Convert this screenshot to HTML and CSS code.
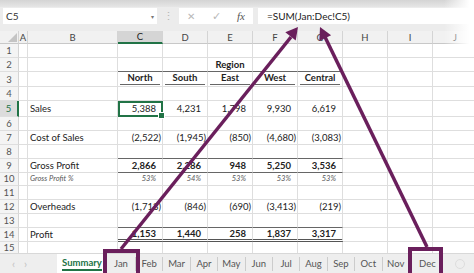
FILE: index.html
```html
<!DOCTYPE html>
<html lang="en">
<head>
    <meta charset="UTF-8">
    <title>Summary - 3D SUM</title>
    <link rel="stylesheet" href="styles.css">
</head>
<body>
<div class="app">
    <div class="ribbon-edge"></div>

    <!-- name box + formula bar -->
    <div class="formula-bar">
        <div class="name-box"><span>C5</span><span class="caret">&#9662;</span></div>
        <div class="grip">&#8942;</div>
        <div class="fx-buttons">
            <span class="btn-x">&#10005;</span>
            <span class="btn-ok">&#10003;</span>
            <span class="btn-fx">fx</span>
        </div>
        <div class="formula">=SUM(Jan:Dec!C5)</div>
    </div>

    <!-- grid -->
    <div class="sheet">
        <div class="row head">
            <div class="corner"><svg width="11" height="11" viewBox="0 0 11 11"><polygon points="10,1 10,10 1,10" fill="#c4c4c4"/></svg></div>
            <div>A</div><div>B</div><div class="sel-col">C</div><div>D</div><div>E</div><div>F</div><div>G</div><div>H</div><div>I</div><div>J</div>
        </div>
        <div class="row h14">
            <div class="rh">1</div><div></div><div></div><div></div><div></div><div></div><div></div><div></div><div></div><div></div><div></div>
        </div>
        <div class="row h14">
            <div class="rh">2</div><div></div><div></div><div class="ln"></div><div class="ln"></div><div class="ln b ctr">Region</div><div class="ln"></div><div class="ln"></div><div></div><div></div><div></div>
        </div>
        <div class="row h15">
            <div class="rh">3</div><div></div><div></div>
            <div class="hd"><span>North</span></div><div class="hd"><span>South</span></div><div class="hd"><span>East</span></div><div class="hd"><span>West</span></div><div class="hd"><span>Central</span></div>
            <div></div><div></div><div></div>
        </div>
        <div class="row h14">
            <div class="rh">4</div><div></div><div></div><div></div><div></div><div></div><div></div><div></div><div></div><div></div><div></div>
        </div>
        <div class="row h16">
            <div class="rh sel-row">5</div><div></div><div>Sales</div>
            <div class="n sel">5,388</div><div class="n">4,231</div><div class="n">1,798</div><div class="n">9,930</div><div class="n">6,619</div>
            <div></div><div></div><div></div>
        </div>
        <div class="row h13">
            <div class="rh">6</div><div></div><div></div><div></div><div></div><div></div><div></div><div></div><div></div><div></div><div></div>
        </div>
        <div class="row h14">
            <div class="rh">7</div><div></div><div>Cost of Sales</div>
            <div class="n neg">(2,522)</div><div class="n neg">(1,945)</div><div class="n neg">(850)</div><div class="n neg">(4,680)</div><div class="n neg">(3,083)</div>
            <div></div><div></div><div></div>
        </div>
        <div class="row h14">
            <div class="rh">8</div><div></div><div></div><div class="ln"></div><div class="ln"></div><div class="ln"></div><div class="ln"></div><div class="ln"></div><div></div><div></div><div></div>
        </div>
        <div class="row h14">
            <div class="rh">9</div><div></div><div>Gross Profit</div>
            <div class="n b ln">2,866</div><div class="n b ln">2,286</div><div class="n b ln">948</div><div class="n b ln">5,250</div><div class="n b ln">3,536</div>
            <div></div><div></div><div></div>
        </div>
        <div class="row h13">
            <div class="rh">10</div><div></div><div class="pct">Gross Profit %</div>
            <div class="n pct">53%</div><div class="n pct">54%</div><div class="n pct">53%</div><div class="n pct">53%</div><div class="n pct">53%</div>
            <div></div><div></div><div></div>
        </div>
        <div class="row h14">
            <div class="rh">11</div><div></div><div></div><div></div><div></div><div></div><div></div><div></div><div></div><div></div><div></div>
        </div>
        <div class="row h14">
            <div class="rh">12</div><div></div><div>Overheads</div>
            <div class="n neg">(1,713)</div><div class="n neg">(846)</div><div class="n neg">(690)</div><div class="n neg">(3,413)</div><div class="n neg">(219)</div>
            <div></div><div></div><div></div>
        </div>
        <div class="row h13">
            <div class="rh">13</div><div></div><div></div><div class="ln"></div><div class="ln"></div><div class="ln"></div><div class="ln"></div><div class="ln"></div><div></div><div></div><div></div>
        </div>
        <div class="row h14">
            <div class="rh">14</div><div></div><div>Profit</div>
            <div class="n b dbl">1,153</div><div class="n b dbl">1,440</div><div class="n b dbl">258</div><div class="n b dbl">1,837</div><div class="n b dbl">3,317</div>
            <div></div><div></div><div></div>
        </div>
        <div class="row h13">
            <div class="rh">15</div><div></div><div></div><div></div><div></div><div></div><div></div><div></div><div></div><div></div><div></div>
        </div>
    </div>

    <!-- sheet tabs -->
    <div class="tabs">
        <div class="nav"><span>&#8249;</span><span>&#8250;</span></div>
        <div class="tab active"><span>Summary</span></div>
        <div class="tab jan">Jan</div>
        <div class="tab">Feb</div>
        <div class="tab">Mar</div>
        <div class="tab">Apr</div>
        <div class="tab">May</div>
        <div class="tab">Jun</div>
        <div class="tab">Jul</div>
        <div class="tab">Aug</div>
        <div class="tab">Sep</div>
        <div class="tab">Oct</div>
        <div class="tab">Nov</div>
        <div class="tab dec">Dec</div>
        <div class="add"></div>
    </div>

    <div class="fade"></div>

    <!-- callout arrows -->
    <svg class="arrows" width="474" height="273" viewBox="0 0 474 273">
        <g stroke="#6a1f5c" fill="none" stroke-width="4">
            <rect x="105" y="251" width="33" height="24"/>
            <rect x="410" y="249" width="31" height="26"/>
        </g>
        <g stroke="#6a1f5c" stroke-width="3.5">
            <line x1="121" y1="249" x2="291" y2="37"/>
            <line x1="427" y1="247" x2="325" y2="37"/>
        </g>
        <g fill="#6a1f5c">
            <polygon points="298,27 295.7,40.6 285.3,32.2"/>
            <polygon points="320,27 331.1,35.2 319.3,40.9"/>
        </g>
    </svg>
</div>
</body>
</html>
```

FILE: styles.css
```css
* {
    box-sizing: border-box;
}
body {
    margin: 0;
    background: #fff;
    font-family: Lato, "Liberation Sans", sans-serif;
    color: #222;
}
.app {
    position: relative;
    width: 474px;
    height: 273px;
    overflow: hidden;
}
.ribbon-edge {
    height: 7px;
    background: linear-gradient(#d4d4d4, #e6e6e6);
}
.formula-bar {
    display: flex;
    align-items: flex-start;
    height: 24px;
    padding: 1px 0 0 3px;
    background: #ececec;
}
.name-box {
    width: 154px;
    height: 16px;
    background: #fff;
    display: flex;
    align-items: center;
    justify-content: space-between;
    padding: 0 3px 0 3px;
    font-size: 10px;
    color: #333;
}
.caret {
    font-size: 6px;
    color: #777;
}
.grip {
    width: 22px;
    height: 16px;
    text-align: center;
    font-size: 11px;
    line-height: 16px;
    color: #b5b5b5;
}
.fx-buttons {
    width: 74px;
    height: 16px;
    background: #fff;
    display: flex;
    align-items: center;
    color: #b8b8b8;
}
.btn-x {
    width: 24px;
    text-align: center;
    font-size: 10px;
}
.btn-ok {
    width: 26px;
    text-align: center;
    font-size: 11px;
}
.btn-fx {
    width: 24px;
    text-align: center;
    font-family: "Liberation Serif", serif;
    font-style: italic;
    font-size: 11px;
    color: #555;
}
.formula {
    flex: 1;
    height: 16px;
    margin-left: 5px;
    background: #fff;
    padding-left: 9px;
    font-size: 10px;
    line-height: 16px;
    color: #222;
}

/* grid */
.sheet {
    height: 222px;
    overflow: hidden;
}
.row {
    display: grid;
    grid-template-columns: 19px 9px 90px repeat(8, 45px);
    font-size: 9.5px;
}
.row > div {
    display: flex;
    align-items: center;
    padding: 0 2px;
    white-space: nowrap;
    border-right: 1px solid #dedede;
    border-bottom: 1px solid #dedede;
}
.h13 { height: 13.5px; }
.h14 { height: 14px; }
.h15 { height: 15px; }
.h16 { height: 16px; }

.head {
    height: 13px;
    color: #444;
}
.head > div {
    justify-content: center;
    background: #f1f1f1;
    border-right-color: #d4d4d4;
    border-bottom-color: #c8c8c8;
}
.head .corner {
    justify-content: flex-end;
    align-items: flex-end;
    padding: 0;
}
.head .sel-col {
    background: #d5d5d5;
    border-bottom: 2px solid #217346;
    color: #222;
}
.row .rh {
    justify-content: center;
    background: #f4f4f4;
    color: #555;
    border-right-color: #d4d4d4;
    padding: 0;
}
.row .sel-row {
    background: #dcdcdc;
    color: #217346;
    border-right: 2px solid #217346;
}

.b {
    font-weight: bold;
}
.row .ctr {
    justify-content: center;
}
.row .ln {
    border-bottom-color: #666;
}
.row .dbl {
    border-bottom: 3px double #555;
}
.row .hd {
    align-items: flex-end;
    padding: 0 2px 1px;
    font-weight: bold;
}
.hd span {
    flex: 1;
    text-align: center;
    border-bottom: 1px solid #666;
    line-height: 12px;
}
.row .n {
    justify-content: flex-end;
    padding-right: 6px;
}
.row .neg {
    padding-right: 1px;
}
.row .pct {
    font-style: italic;
    font-size: 7.5px;
    color: #555;
}
.row .sel {
    position: relative;
    outline: 2px solid #217346;
    outline-offset: -2px;
}
.sel::after {
    content: "";
    position: absolute;
    right: -3px;
    bottom: -3px;
    width: 5px;
    height: 5px;
    background: #217346;
    border: 1px solid #fff;
}

/* tabs */
.tabs {
    height: 20px;
    display: flex;
    align-items: center;
    background: #eeeeee;
    border-top: 1px solid #d8d8d8;
    font-size: 9.5px;
    color: #555;
}
.nav {
    width: 57px;
    display: flex;
    padding-left: 12px;
    gap: 9px;
    color: #c2c2c2;
    font-size: 11px;
}
.tab {
    width: 27.4px;
    height: 14px;
    line-height: 14px;
    text-align: center;
    border-right: 1px solid #cccccc;
}
.tab.active {
    width: 50px;
    height: 19px;
    line-height: 17px;
    background: #fff;
    color: #217346;
    font-weight: bold;
    border-right: none;
}
.tab.active span {
    display: inline-block;
    border-bottom: 2px solid #217346;
    line-height: 13px;
}
.tab.jan {
    width: 29px;
}
.tab.dec {
    width: 35px;
    border-right: none;
}
.add {
    margin-left: auto;
    margin-right: 9px;
    width: 10px;
    height: 10px;
    border-radius: 50%;
    border: 1px solid #dddddd;
}

.fade {
    position: absolute;
    top: 0;
    right: 0;
    width: 30px;
    height: 44px;
    background: linear-gradient(to right, rgba(255,255,255,0), #fff 85%);
}
.arrows {
    position: absolute;
    top: 0;
    left: 0;
    pointer-events: none;
}
```
